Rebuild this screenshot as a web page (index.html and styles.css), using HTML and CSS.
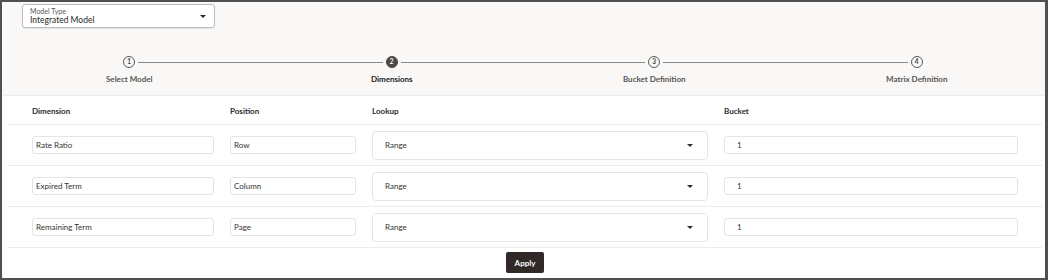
FILE: index.html
```html
<!DOCTYPE html>
<html>
<head>
<meta charset="utf-8">
<link rel="stylesheet" href="styles.css">
</head>
<body>
<div class="frame">
  <div class="top">
    <div class="model-select">
      <div class="ms-text">
        <div class="ms-label">Model Type</div>
        <div class="ms-value">Integrated Model</div>
      </div>
      <span class="caret"></span>
    </div>
    <div class="stepper">
      <div class="step first">
        <div class="step-head"><span class="line"></span><span class="circle">1</span><span class="line"></span></div>
        <div class="step-label">Select Model</div>
      </div>
      <div class="step current">
        <div class="step-head"><span class="line"></span><span class="circle">2</span><span class="line"></span></div>
        <div class="step-label">Dimensions</div>
      </div>
      <div class="step">
        <div class="step-head"><span class="line"></span><span class="circle">3</span><span class="line"></span></div>
        <div class="step-label">Bucket Definition</div>
      </div>
      <div class="step last">
        <div class="step-head"><span class="line"></span><span class="circle">4</span><span class="line"></span></div>
        <div class="step-label">Matrix Definition</div>
      </div>
    </div>
  </div>
  <div class="panel">
    <div class="row head">
      <div>Dimension</div>
      <div>Position</div>
      <div>Lookup</div>
      <div>Bucket</div>
    </div>
    <div class="row">
      <div class="field">Rate Ratio</div>
      <div class="field">Row</div>
      <div class="select">Range<span class="caret"></span></div>
      <div class="field num">1</div>
    </div>
    <div class="row">
      <div class="field">Expired Term</div>
      <div class="field">Column</div>
      <div class="select">Range<span class="caret"></span></div>
      <div class="field num">1</div>
    </div>
    <div class="row">
      <div class="field">Remaining Term</div>
      <div class="field">Page</div>
      <div class="select">Range<span class="caret"></span></div>
      <div class="field num">1</div>
    </div>
    <div class="actions">
      <button class="apply">Apply</button>
    </div>
  </div>
</div>
</body>
</html>
```

FILE: styles.css
```css
* { box-sizing: border-box; }
html, body { margin: 0; padding: 0; }
body {
  font-family: Lato, "Liberation Sans", sans-serif;
  color: #2b2b2b;
  background: #fff;
}
.frame {
  width: 1048px;
  height: 280px;
  border: 2px solid #505050;
  border-right-width: 3px;
  background: #f9f8f6;
  overflow: hidden;
  display: flex;
  flex-direction: column;
}
.top {
  height: 93px;
  padding-top: 2px;
}
.model-select {
  margin-left: 20px;
  width: 193px;
  height: 24px;
  background: #fff;
  border: 1px solid #bdbdbd;
  border-radius: 3px;
  box-shadow: 0 1px 1px rgba(0,0,0,0.08);
  display: flex;
  align-items: center;
  padding: 0 8px 0 7px;
}
.ms-text { flex: 1; }
.ms-label {
  font-size: 7px;
  line-height: 8px;
  color: #555;
}
.ms-value {
  font-size: 8.5px;
  line-height: 10px;
  color: #1f1f1f;
}
.caret {
  width: 0;
  height: 0;
  border-left: 3px solid transparent;
  border-right: 3px solid transparent;
  border-top: 3px solid #2b2b2b;
}
.stepper {
  margin: 28px -3px 0 -4px;
  display: grid;
  grid-template-columns: repeat(4, 1fr);
}
.step-head {
  display: flex;
  align-items: center;
  height: 12px;
  gap: 3px;
}
.line {
  flex: 1;
  height: 1px;
  background: #8a8a8a;
}
.step.first .step-head .line:first-child,
.step.last .step-head .line:last-child { visibility: hidden; }
.circle {
  width: 12px;
  height: 12px;
  border: 1.3px solid #5a5a5a;
  border-radius: 50%;
  font-size: 6.5px;
  font-weight: 700;
  color: #444;
  display: flex;
  align-items: center;
  justify-content: center;
  line-height: 1;
}
.step.current .circle {
  background: #4d4845;
  border-color: #4d4845;
  color: #fff;
}
.step-label {
  margin-top: 5px;
  text-align: center;
  font-size: 8px;
  line-height: 12px;
  font-weight: 700;
  color: #555;
}
.step.current .step-label { color: #222; }
.panel {
  flex: 1;
  background: #fff;
  border-top: 1px solid #ececec;
  border-radius: 0 0 4px 4px;
  margin: 0 0 0 1px;
  padding: 0 3px 0 5px;
  display: flex;
  flex-direction: column;
}
.row {
  display: grid;
  grid-template-columns: 182px 126px 336px 294px;
  column-gap: 16px;
  align-items: center;
  padding-left: 24px;
  height: 41px;
  border-bottom: 1px solid #ececec;
  font-size: 8px;
}
.row.head {
  height: 29px;
  font-weight: 700;
  color: #2b2b2b;
  padding-top: 2px;
}
.field {
  height: 18px;
  border: 1px solid #e4e4e4;
  border-radius: 3px;
  display: flex;
  align-items: center;
  padding-left: 3px;
  color: #333;
}
.field.num { padding-left: 12px; }
.select {
  height: 29px;
  border: 1px solid #e4e4e4;
  border-radius: 4px;
  display: flex;
  align-items: center;
  justify-content: space-between;
  padding: 0 14px 0 12px;
  color: #333;
}
.actions {
  display: flex;
  justify-content: center;
  padding-top: 4px;
}
.apply {
  width: 38px;
  height: 21px;
  background: #2f2a27;
  color: #fff;
  border: none;
  border-radius: 2px;
  font-family: Lato, "Liberation Sans", sans-serif;
  font-size: 8px;
  font-weight: 700;
  padding: 0;
}
```
